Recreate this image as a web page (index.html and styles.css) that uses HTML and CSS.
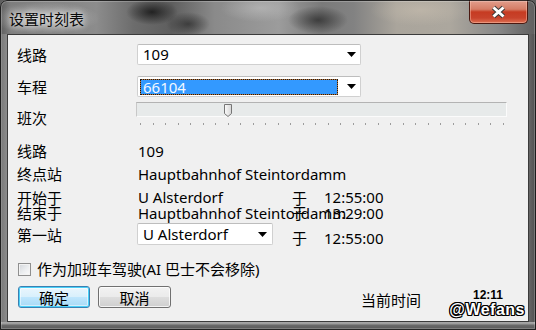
FILE: index.html
```html
<!DOCTYPE html>
<html lang="zh-CN">
<head>
<meta charset="utf-8">
<title>设置时刻表</title>
<link rel="stylesheet" href="styles.css">
</head>
<body>
<div class="window">
  <div class="titlebar">
    <span class="title">设置时刻表</span>
    <div class="close">
      <svg width="17" height="14" viewBox="0 0 17 14">
        <path class="x-out" d="M3.5 2.5 L13.5 11.5 M13.5 2.5 L3.5 11.5"/>
        <path class="x-in" d="M3.5 2.5 L13.5 11.5 M13.5 2.5 L3.5 11.5"/>
      </svg>
    </div>
  </div>
  <div class="client">
    <div class="row row-combo first">
      <span class="label">线路</span>
      <div class="combo wide">
        <span class="combo-text">109</span>
        <svg class="arrow" width="9" height="5" viewBox="0 0 9 5"><path d="M0 0H9L4.5 5Z"/></svg>
      </div>
    </div>
    <div class="row row-combo second">
      <span class="label">车程</span>
      <div class="combo wide">
        <span class="combo-sel">66104</span>
        <svg class="arrow" width="9" height="5" viewBox="0 0 9 5"><path d="M0 0H9L4.5 5Z"/></svg>
      </div>
    </div>
    <div class="row row-slider">
      <span class="label slider-label">班次</span>
      <div class="slider">
        <div class="track">
          <svg class="thumb" width="8" height="13" viewBox="0 0 8 13">
            <defs><linearGradient id="tg" x1="0" y1="0" x2="1" y2="0"><stop offset="0" stop-color="#fbfbfb"/><stop offset="1" stop-color="#d6d6d6"/></linearGradient></defs>
            <path d="M0.5 0.5H7.5V9.5L4 12.5L0.5 9.5Z" fill="url(#tg)" stroke="#767676"/>
          </svg>
        </div>
        <div class="ticks">
          <i></i><i></i><i></i><i></i><i></i><i></i><i></i><i></i><i></i><i></i>
          <i></i><i></i><i></i><i></i><i></i><i></i><i></i><i></i><i></i><i></i>
          <i></i><i></i><i></i><i></i><i></i><i></i><i></i><i></i><i></i><i></i>
        </div>
      </div>
    </div>
    <div class="info row-a">
      <span class="label">线路</span><span class="val">109</span>
    </div>
    <div class="info row-b">
      <span class="label">终点站</span><span class="val">Hauptbahnhof Steintordamm</span>
    </div>
    <div class="info row-c">
      <span class="label">开始于</span><span class="val">U Alsterdorf</span><span class="yu">于</span><span class="time">12:55:00</span>
    </div>
    <div class="info row-d">
      <span class="label">结束于</span><span class="val">Hauptbahnhof Steintordamm</span><span class="yu">于</span><span class="time">13:29:00</span>
    </div>
    <div class="info row-e">
      <span class="label">第一站</span>
      <div class="combo narrow">
        <span class="combo-text">U Alsterdorf</span>
        <svg class="arrow" width="9" height="5" viewBox="0 0 9 5"><path d="M0 0H9L4.5 5Z"/></svg>
      </div>
      <span class="yu">于</span><span class="time">12:55:00</span>
    </div>
    <div class="check-row">
      <span class="checkbox"></span>
      <span class="check-label">作为加班车驾驶(AI 巴士不会移除)</span>
    </div>
    <div class="bottom-row">
      <button class="btn default">确定</button>
      <button class="btn">取消</button>
      <span class="now-label">当前时间</span>
      <span class="clock">12:11</span>
    </div>
  </div>
  <div class="bottom-frame"></div>
  <div class="watermark">@Wefans</div>
</div>
</body>
</html>
```

FILE: styles.css
```css
* { box-sizing: border-box; }
html, body { margin: 0; padding: 0; }
body {
  width: 536px;
  height: 330px;
  overflow: hidden;
  background: #5e5e5e;
  font-family: "Noto Sans", "Noto Sans CJK SC", sans-serif;
  font-size: 15px;
  color: #000;
}
.window {
  position: relative;
  width: 536px;
  height: 330px;
  display: flex;
  flex-direction: column;
  border-radius: 7px 7px 0 0;
  overflow: hidden;
  background:
    linear-gradient(90deg, #4a4a4a 0, #7c7c7c 0.4%, #8a8a8a 1.2%, #7a7a7a 30%, #8e8e8e 60%, #868686 97%, #555 99.6%, #4a4a4a 100%);
}
.window::after {
  content: "";
  position: absolute;
  inset: 0;
  border: 1px solid rgba(20, 20, 20, 0.85);
  border-radius: 7px 7px 0 0;
  box-shadow: inset 0 0 0 1px rgba(255, 255, 255, 0.22);
  pointer-events: none;
}
.titlebar {
  height: 34px;
  flex: none;
  display: flex;
  align-items: flex-start;
  background:
    radial-gradient(ellipse 55px 16px at 45px 18px, rgba(225, 225, 225, 0.5), rgba(225, 225, 225, 0) 100%),
    radial-gradient(ellipse 26px 13px at 152px 12px, rgba(30, 30, 30, 0.95), rgba(30, 30, 30, 0) 100%),
    radial-gradient(ellipse 22px 12px at 188px 24px, rgba(40, 40, 40, 0.7), rgba(40, 40, 40, 0) 100%),
    radial-gradient(ellipse 30px 14px at 318px 20px, rgba(40, 40, 40, 0.75), rgba(40, 40, 40, 0) 100%),
    radial-gradient(ellipse 40px 14px at 260px 8px, rgba(200, 200, 200, 0.5), rgba(200, 200, 200, 0) 100%),
    radial-gradient(ellipse 50px 16px at 420px 10px, rgba(200, 190, 175, 0.6), rgba(200, 190, 175, 0) 100%),
    linear-gradient(90deg, #5e5e5e 0, #7e7e7e 2%, #8c8c8c 18%, #6c6c6c 25%, #5e5e5e 32%, #8a8a8a 40%, #9c9c9c 52%, #7a7a7a 60%, #828282 66%, #aaa59c 74%, #aca79e 84%, #888 93%, #5e5e5e 100%);
}
.title {
  margin: 9px 0 0 9px;
  line-height: 20px;
  font-size: 15px;
  font-family: "Noto Sans CJK SC", sans-serif;
  color: #0a0a0a;
  text-shadow: 0 0 6px rgba(255, 255, 255, 0.9), 0 0 10px rgba(255, 255, 255, 0.6);
}
.close {
  margin-left: auto;
  margin-right: 8px;
  width: 59px;
  height: 24px;
  display: flex;
  align-items: center;
  justify-content: center;
  border: 1px solid #4a1810;
  border-top: none;
  border-radius: 0 0 5px 5px;
  background: linear-gradient(180deg, #e3a190 0%, #d57d66 40%, #c63b22 52%, #c8432c 78%, #de7052 100%);
  box-shadow: inset 0 0 0 1px rgba(255, 200, 180, 0.45);
}
.close svg { margin-top: 1px; }
.x-out { stroke: #3a3a3a; stroke-width: 5; fill: none; }
.x-in { stroke: #ffffff; stroke-width: 3; fill: none; }

.client {
  margin: 0 7px;
  height: 288px;
  flex: none;
  border: 1px solid #3b3b3b;
  background: #f0f0f0;
  display: flex;
  flex-direction: column;
  padding-top: 9px;
}
.bottom-frame {
  flex: 1;
  margin: 0 1px 1px;
  background: linear-gradient(180deg, #a9a9a9 0, #9a9a9a 2px, #6a6a6a 3px, #5a5a5a 100%);
}
.row {
  display: flex;
  align-items: center;
  padding-left: 9px;
}
.label {
  width: 120px;
  flex: none;
  white-space: nowrap;
  font-family: "Noto Sans CJK SC", sans-serif;
}
.row-combo { height: 21px; line-height: 21px; }
.row-combo.second { margin-top: 11px; }

.combo {
  display: flex;
  align-items: center;
  justify-content: space-between;
  background: #ffffff;
  border: 1px solid #d0d0d0;
  border-top-color: #bdbdbd;
  border-radius: 2px;
}
.combo.wide { width: 224px; height: 21px; }
.combo.narrow { width: 136px; height: 22px; margin-left: -1px; }
.combo-text {
  padding-left: 5px;
  line-height: 19px;
  white-space: nowrap;
}
.combo-sel {
  align-self: flex-start;
  margin: 2px 0 0 2px;
  width: 198px;
  height: 16px;
  padding-left: 2px;
  line-height: 15px;
  overflow: hidden;
  color: #f2f8ff;
  border: 1px dotted #1a1a1a;
  background: linear-gradient(#3399ff, #3399ff) padding-box, #b8743a border-box;
}
.arrow { margin-right: 4px; flex: none; }
.arrow path { fill: #000; }
.combo.narrow .arrow { margin-right: 5px; }

.row-slider {
  height: 32px;
  align-items: flex-start;
}
.slider-label {
  margin-top: 11px;
  line-height: 20px;
}
.slider {
  margin-left: -1px;
  width: 371px;
  display: flex;
  flex-direction: column;
}
.track {
  position: relative;
  margin-top: 5px;
  height: 15px;
  background: #e7eaea;
  border: 1px solid #fbfbfb;
  border-top-color: #b3b3b3;
  border-left-color: #c8c8c8;
}
.thumb {
  position: absolute;
  left: 87px;
  top: 1px;
}
.ticks {
  margin: 6px 0 0 4px;
  width: 364px;
  height: 2px;
  display: flex;
  justify-content: space-between;
}
.ticks i {
  display: block;
  width: 1px;
  height: 2px;
  background: #9c9c9c;
}

.info {
  display: grid;
  grid-template-columns: 121px 154px 32px 1fr;
  padding-left: 9px;
  white-space: nowrap;
}
.info > * { grid-row: 1; }
.info .label { grid-column: 1; width: auto; }
.info .val { grid-column: 2 / -1; }
.info .yu { grid-column: 3; font-family: "Noto Sans CJK SC", sans-serif; }
.info .time { grid-column: 4; }
.info .combo { grid-column: 2; }

.row-a { margin-top: 11px; height: 22px; line-height: 22px; }
.row-b { height: 24px; line-height: 24px; }
.row-c { margin-top: 4px; height: 15px; line-height: 15px; }
.row-d { margin-top: 1px; height: 14px; line-height: 14px; }
.row-e { margin-top: 3px; height: 22px; line-height: 20px; }
.row-e .label { padding-top: 2px; }
.row-e .yu, .row-e .time { padding-top: 8px; line-height: 14px; }

.check-row {
  margin-top: 17px;
  height: 14px;
  padding-left: 10px;
  display: flex;
  align-items: center;
  line-height: 14px;
}
.checkbox {
  width: 13px;
  height: 13px;
  flex: none;
  border: 1px solid #8f8f8f;
  background: linear-gradient(135deg, #d3d6da 0%, #eceef0 55%, #fbfbfb 100%);
  box-shadow: inset 0 0 0 1px #f3f3f3;
}
.check-label {
  margin-left: 6px;
  white-space: nowrap;
}

.bottom-row {
  margin-top: 10px;
  padding-left: 10px;
  display: flex;
  align-items: flex-start;
}
.btn {
  width: 72px;
  height: 22px;
  padding: 0;
  margin: 0;
  font: inherit;
  font-family: "Noto Sans CJK SC", sans-serif;
  line-height: 19px;
  color: #000;
  border: 1px solid #707070;
  border-radius: 3px;
  background: linear-gradient(180deg, #f2f2f2 0%, #ebebeb 48%, #dddddd 52%, #cfcfcf 100%);
  box-shadow: inset 0 0 0 1px rgba(255, 255, 255, 0.75);
}
.btn + .btn { margin-left: 8px; width: 73px; }
.btn.default {
  border-color: #3c7fb1;
  background: linear-gradient(180deg, #eaf6fd 0%, #d9f0fc 48%, #bee6fd 52%, #a7d9f5 100%);
  box-shadow: inset 0 0 0 1px #48d0f8, inset 0 0 0 2px rgba(255, 255, 255, 0.5);
}
.now-label {
  margin-left: 190px;
  margin-top: 4px;
  line-height: 19px;
  font-family: "Noto Sans CJK SC", sans-serif;
  white-space: nowrap;
}
.clock {
  margin-left: 52px;
  margin-top: 2px;
  line-height: 15px;
  font-family: "Liberation Sans", sans-serif;
  font-weight: bold;
  font-size: 12px;
}
.watermark {
  position: absolute;
  right: 11px;
  bottom: 12px;
  font-family: "Liberation Sans", sans-serif;
  font-weight: bold;
  font-size: 16px;
  line-height: 16px;
  letter-spacing: 0.5px;
  color: #fff;
  text-shadow:
    1px 0 0 #000, -1px 0 0 #000, 0 1px 0 #000, 0 -1px 0 #000,
    1px 1px 0 #000, -1px -1px 0 #000, 1px -1px 0 #000, -1px 1px 0 #000;
}
```
